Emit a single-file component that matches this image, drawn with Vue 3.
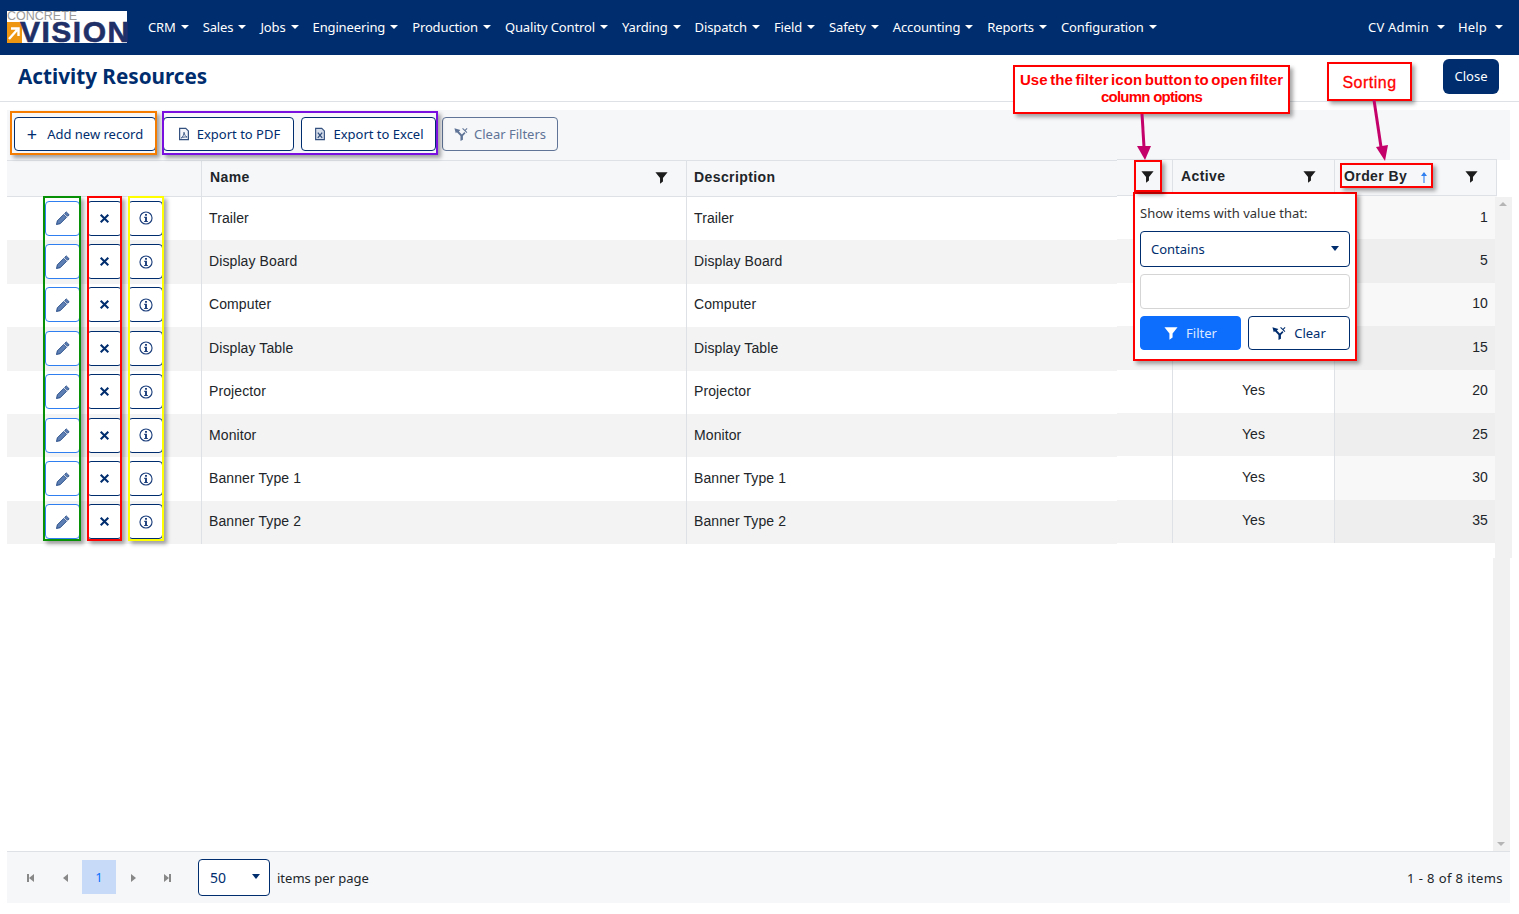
<script setup>
const menus = ['CRM','Sales','Jobs','Engineering','Production','Quality Control','Yarding','Dispatch','Field','Safety','Accounting','Reports','Configuration']
const rows = [
  { name:'Trailer', active:'Yes', order:1 },
  { name:'Display Board', active:'Yes', order:5 },
  { name:'Computer', active:'Yes', order:10 },
  { name:'Display Table', active:'Yes', order:15 },
  { name:'Projector', active:'Yes', order:20 },
  { name:'Monitor', active:'Yes', order:25 },
  { name:'Banner Type 1', active:'Yes', order:30 },
  { name:'Banner Type 2', active:'Yes', order:35 },
]
</script>

<template>
  <div class="app">
    <svg class="sprite" width="0" height="0">
      <symbol id="funnel" viewBox="0 0 16 16"><path d="M0.500 1.500h15L9.800 8.500V13l-3.600 2.600V8.500z" fill="currentColor"/></symbol>
      <symbol id="clearf" viewBox="0 0 16 16"><path d="M0.500 1.500l6.800 1.900-1.700 1.700 3.400 3.600 2.800-2.900 1.300 1.400-2.900 3.100v4.400L7.400 16V10.300L3.300 5.900 2 7z" fill="currentColor"/><path d="M9.800 1.500l5 5M15 1.500l-2.300 2.300" stroke="currentColor" stroke-width="1.200" fill="none"/></symbol>
      <symbol id="pencil" viewBox="0 0 16 16"><path d="M11.700 1l3.300 3.300-1.800 1.800-3.300-3.300zM8.800 3.900l3.300 3.300-7.300 7.300-4.300 1 1-4.300z" fill="#5d7fb3" stroke="#123a7a" stroke-width=".9" stroke-linejoin="round"/></symbol>
      <symbol id="cross" viewBox="0 0 16 16"><path d="M2.500 2.500l11 11M13.500 2.500l-11 11" stroke="currentColor" stroke-width="3" fill="none"/></symbol>
      <symbol id="info" viewBox="0 0 16 16"><circle cx="8" cy="8" r="6.900" fill="none" stroke="currentColor" stroke-width="1.300"/><path d="M6.900 3.400h2.200v2H6.900zM6 6.700h3.100v4.600h1v1.300H5.900v-1.300h1V8H6z" fill="currentColor"/></symbol>
      <symbol id="pdf" viewBox="0 0 16 16"><path d="M3 1.500h7l3 3v10H3z" fill="#f4f6fa" stroke="currentColor" stroke-width="1.400"/><path d="M4.800 12.500c2-1 3.200-4 3.200-6.500 .5 3 2 5 3.500 5.500-2.500-.3-4.700 0-6.700 1z" fill="none" stroke="currentColor" stroke-width="1"/></symbol>
      <symbol id="xls" viewBox="0 0 16 16"><path d="M3 1.500h7l3 3v10H3z" fill="#d5dcea" stroke="currentColor" stroke-width="1.300"/><path d="M5.500 6.500l5 6M10.500 6.500l-5 6" stroke="currentColor" stroke-width="1.500" fill="none"/></symbol>
      <symbol id="arrowup" viewBox="0 0 8 12"><path d="M4 2v10" stroke="currentColor" stroke-width="1.100" fill="none"/><path d="M4 1L7 5H1z" fill="currentColor"/></symbol>
    </svg>

    <nav class="nav">
      <div class="logo">
        <span class="logo-top">CONCRETE</span>
        <div class="logo-main">
          <svg class="logo-arrow" viewBox="0 0 15 21"><rect width="15" height="21" fill="#ee9611"/><path d="M2 17L10 8M4 6.500h7.500V14" stroke="#fff" stroke-width="2.400" fill="none"/></svg>
          <span class="logo-word">VISION</span>
        </div>
      </div>
      <ul class="menu">
        <li v-for="m in menus" :key="m">{{ m }}<i class="caret"></i></li>
      </ul>
      <ul class="menu menu-right">
        <li>CV Admin<i class="caret wide"></i></li>
        <li>Help<i class="caret wide"></i></li>
      </ul>
    </nav>

    <header class="titlebar">
      <h1>Activity Resources</h1>
      <button class="close">Close</button>
    </header>

    <main class="content">
      <div class="toolbar">
        <button class="btn add"><span class="plus">+</span>Add new record</button>
        <button class="btn pdf"><svg class="ic"><use href="#pdf"/></svg>Export to PDF</button>
        <button class="btn xls"><svg class="ic"><use href="#xls"/></svg>Export to Excel</button>
        <button class="btn clear"><svg class="ic"><use href="#clearf"/></svg>Clear Filters</button>
      </div>

      <div class="gridwrap">
        <section class="locked">
          <div class="hrow lgrid">
            <div class="hcell"></div>
            <div class="hcell">Name<svg class="funnel"><use href="#funnel"/></svg></div>
            <div class="hcell open">Description</div>
          </div>
          <div v-for="(r, i) in rows" :key="r.name" class="row lgrid" :class="{ alt: i % 2 }">
            <div class="cell actions">
              <button class="ibtn edit"><svg><use href="#pencil"/></svg></button>
              <button class="ibtn"><svg class="sm"><use href="#cross"/></svg></button>
              <button class="ibtn"><svg><use href="#info"/></svg></button>
            </div>
            <div class="cell">{{ r.name }}</div>
            <div class="cell open">{{ r.name }}</div>
          </div>
        </section>
        <section class="side">
          <div class="hrow rgrid">
            <div class="hcell filter-only"><svg class="funnel"><use href="#funnel"/></svg></div>
            <div class="hcell">Active<svg class="funnel"><use href="#funnel"/></svg></div>
            <div class="hcell last">Order By<svg class="sort"><use href="#arrowup"/></svg><svg class="funnel"><use href="#funnel"/></svg></div>
          </div>
          <div v-for="(r, i) in rows" :key="r.order" class="row rgrid" :class="{ alt: i % 2 }">
            <div class="cell"></div>
            <div class="cell center">{{ r.active }}</div>
            <div class="cell num">{{ r.order }}</div>
          </div>
        </section>
        <div class="sb sb-top"><i class="up"></i></div>
        <div class="sb sb-bottom"><i class="down"></i></div>
      </div>

      <footer class="pager">
        <span class="pg first"><i class="bar"></i><i class="tri-l"></i></span>
        <span class="pg prev"><i class="tri-l"></i></span>
        <span class="pg-cur">1</span>
        <span class="pg next"><i class="tri-r"></i></span>
        <span class="pg last-p"><i class="tri-r"></i><i class="bar"></i></span>
        <div class="size">50<i class="tri-d"></i></div>
        <span class="ipp">items per page</span>
        <span class="count">1 - 8 of 8 items</span>
      </footer>
    </main>

    <!-- filter popup -->
    <div class="popup">
      <div class="pop-label">Show items with value that:</div>
      <div class="pop-select">Contains<i class="tri-d"></i></div>
      <div class="pop-input"></div>
      <div class="pop-btns">
        <button class="pb primary"><svg class="ic"><use href="#funnel"/></svg>Filter</button>
        <button class="pb"><svg class="ic"><use href="#clearf"/></svg>Clear</button>
      </div>
    </div>

    <!-- annotation layer -->
    <div class="frame" style="left:10px;top:111px;width:147px;height:44px;border-color:#f47c00"></div>
    <div class="frame" style="left:162px;top:111px;width:276px;height:44px;border-color:#7a10e0"></div>
    <div class="frame" style="left:43px;top:196px;width:38px;height:345px;border-color:#079107"></div>
    <div class="frame" style="left:87px;top:196px;width:35px;height:345px;border-color:#f00"></div>
    <div class="frame" style="left:128px;top:196px;width:36px;height:345px;border-color:#ff0"></div>
    <div class="frame" style="left:1134px;top:160px;width:28px;height:32px;border-color:#f00"></div>
    <div class="frame" style="left:1340px;top:163px;width:93px;height:25px;border-color:#f00"></div>
    <div class="callout c1"><span>Use the filter icon button to open filter</span><span class="tight">column options</span></div>
    <div class="callout c2">Sorting</div>
    <svg class="arrows" width="1519" height="914">
      <g stroke="#c4006a" stroke-width="3" fill="#c4006a">
        <path d="M1142 114L1144 147" fill="none"/>
        <path d="M1137 146L1151 146L1145 160z" stroke="none"/>
        <path d="M1374 100L1381 147" fill="none"/>
        <path d="M1376 147L1388 145L1385 161z" stroke="none"/>
      </g>
    </svg>
  </div>
</template>

<style>
html, body { background: #fff; }
</style>

<style scoped>
* { box-sizing: border-box; }
.app { position: relative; width: 1519px; height: 914px; overflow: hidden; background: #fff; display: flex; flex-direction: column; font-family: "Noto Sans", sans-serif; font-size: 13px; color: #212529; }
.sprite { position: absolute; }
button { font-family: inherit; cursor: pointer; }

.nav { height: 55px; flex: none; background: #002d6e; display: flex; align-items: center; padding: 0 7px; color: #fff; }
.logo { width: 120px; height: 32px; margin-top: -2px; background: #fff; flex: none; display: flex; flex-direction: column; }
.logo-top { height: 10px; font: 12.500px/10px "Liberation Sans", sans-serif; color: #9a9a9a; }
.logo-main { height: 22px; position: relative; }
.logo-arrow { width: 15px; height: 21px; position: absolute; left: 0; bottom: 0; }
.logo-word { position: absolute; left: 13px; bottom: 0; font: 900 30px/22px "Liberation Sans", sans-serif; color: #1f2f68; letter-spacing: 1.500px; -webkit-text-stroke: .6px #1f2f68; }
.menu { list-style: none; margin: -1px 0 0; padding: 0; display: flex; gap: 14px; align-items: center; letter-spacing: -.13px; }
.nav > .menu:first-of-type { margin-left: 21px; }
.menu li { white-space: nowrap; display: flex; align-items: center; }
.caret { width: 0; height: 0; margin-left: 5px; border-left: 4px solid transparent; border-right: 4px solid transparent; border-top: 4px solid #fff; }
.caret.wide { margin-left: 8px; }
.menu-right { margin-left: auto; margin-right: 9px; gap: 13px; letter-spacing: .2px; }

.titlebar { height: 47px; flex: none; border-bottom: 1px solid #dee2e6; display: flex; align-items: center; justify-content: space-between; padding: 0 20px 0 18px; }
.titlebar h1 { margin: -4px 0 0; font: 700 20.700px/1.2 "Noto Sans", sans-serif; color: #002d6e; }
.close { margin-top: -4px; width: 56px; height: 35px; background: #002d6e; border: 0; border-radius: 6px; color: #fff; font-size: 13px; }

.content { flex: 1; min-height: 0; padding: 8px 9px 11px 7px; display: flex; flex-direction: column; }
.toolbar { height: 50px; flex: none; background: #f6f7f9; display: flex; align-items: center; padding: 0 0 2px 7px; gap: 7px; }
.btn { height: 34px; background: #fff; border: 1px solid #002d6e; border-radius: 4px; color: #002d6e; font-size: 13px; display: flex; align-items: center; justify-content: center; gap: 6px; padding: 0; }
.btn.add { width: 142px; gap: 10px; }
.btn.pdf { width: 131px; }
.btn.xls { width: 135px; }
.btn.clear { width: 116px; margin-left: -1px; color: #5f7496; border-color: #5f7496; background: transparent; }
.plus { font-size: 18px; line-height: 16px; }
.ic { width: 14px; height: 14px; }
.btn .ic { color: #33507f; }
.btn.clear .ic { color: #5f7496; }

.gridwrap { flex: 1; min-height: 0; display: flex; position: relative; }
.locked { width: 1110px; flex: none; }
.side { width: 380px; flex: none; margin-top: -1px; }
.lgrid { display: grid; grid-template-columns: 195px 485px 430px; }
.rgrid { display: grid; grid-template-columns: 56px 162px 162px; }
.hrow { height: 37px; background: #f6f7f9; border-top: 1px solid #dee2e6; border-bottom: 1px solid #dee2e6; font: 700 14px "Liberation Sans", sans-serif; letter-spacing: .4px; }
.hcell { border-right: 1px solid #dee2e6; display: flex; align-items: center; padding: 0 8px 3px 8px; position: relative; }
.hcell.open { border-right: 0; padding-left: 7px; }
.hcell.last { padding-left: 9px; }
.funnel { position: absolute; right: 18px; top: 10px; width: 13px; height: 13px; color: #1c1c1c; }
.sort { width: 8px; height: 12px; margin-left: 13px; margin-top: 1px; color: #2f7ff0; }
.row { height: 43.400px; background: #fff; font: 14px "Liberation Sans", sans-serif; letter-spacing: .1px; }
.row.alt { background: #f3f3f3; }
.cell { display: flex; align-items: center; padding: 0 7px 2px; border-right: 1px solid #dee2e6; }
.cell.open { border-right: 0; }
.cell.center { justify-content: center; }
.cell.num { justify-content: flex-end; background: #f8f8f8; border-right: 0; padding-right: 9px; }
.alt .cell.num { background: #eee; }
.actions { gap: 6.500px; padding: 0 0 1px 38px; }
.ibtn { width: 35px; height: 35px; flex: none; padding: 0; background: #fff; border: 1px solid #002d6e; border-radius: 4px; color: #1c3f7c; display: flex; align-items: center; justify-content: center; }
.ibtn.edit { border-color: #2f7ff0; }
.ibtn svg { width: 14px; height: 14px; }
.ibtn svg.sm { width: 11px; height: 11px; color: #002d6e; }

.sb { position: absolute; background: #f1f1f1; width: 17px; }
.sb-top { left: 1488px; top: 37px; height: 361px; }
.sb-bottom { left: 1486px; top: 398px; bottom: 0; }
.up, .down { position: absolute; left: 4px; width: 0; height: 0; border-left: 4px solid transparent; border-right: 4px solid transparent; }
.up { top: 5px; border-bottom: 4px solid #b5b5b5; }
.down { bottom: 5px; border-top: 4px solid #b5b5b5; }

.pager { height: 52px; flex: none; background: #f6f7f9; border-top: 1px solid #dee2e6; display: flex; align-items: center; position: relative; }
.pg { width: 34px; height: 34px; display: flex; align-items: center; justify-content: center; color: #777; }
.pg.first { margin-left: 6px; }
.pager .pg.prev { margin-left: 1px; }
.pg-cur { width: 34px; height: 34px; background: #c7dbf9; color: #0d6efd; display: flex; align-items: center; justify-content: center; margin-top: -1px; }
.bar { width: 2px; height: 8px; background: #888; }
.tri-l { width: 0; height: 0; border-top: 4px solid transparent; border-bottom: 4px solid transparent; border-right: 5px solid #888; }
.tri-r { width: 0; height: 0; border-top: 4px solid transparent; border-bottom: 4px solid transparent; border-left: 5px solid #888; }
.tri-d { position: absolute; width: 0; height: 0; border-left: 4px solid transparent; border-right: 4px solid transparent; border-top: 5px solid #002d6e; }
.size { position: relative; width: 72px; height: 37px; margin-left: 14px; background: #fff; border: 1px solid #002d6e; border-radius: 4px; color: #002d6e; display: flex; align-items: center; padding-left: 11px; font-size: 14px; }
.size .tri-d { right: 9px; top: 14px; }
.ipp { margin-left: 7px; }
.count { margin-left: auto; margin-right: 7px; letter-spacing: .4px; }

.popup { position: absolute; left: 1133px; top: 192px; width: 224px; height: 169px; background: #fff; border: 2px solid #f00; box-shadow: 3px 3px 4px rgba(0,0,0,.35); padding: 11px 5px 0 5px; display: flex; flex-direction: column; }
.pop-label { height: 17px; line-height: 17px; font-size: 13px; color: #333; }
.pop-select { position: relative; margin-top: 9px; height: 36px; width: 210px; border: 1px solid #002d6e; border-radius: 4px; color: #002d6e; display: flex; align-items: center; padding-left: 10px; }
.pop-select .tri-d { right: 10px; top: 14px; }
.pop-input { margin-top: 7px; height: 35px; width: 210px; border: 1px solid #d5d5d5; border-radius: 4px; }
.pop-btns { margin-top: 7px; display: flex; gap: 7px; }
.pb { height: 34px; border-radius: 4px; background: #fff; border: 1px solid #002d6e; color: #002d6e; font-size: 13px; display: flex; align-items: center; justify-content: center; gap: 8px; width: 102px; padding: 0; }
.pb.primary { width: 101px; background: #0d6efd; border-color: #0d6efd; color: #dce8ff; }
.pb.primary .ic { color: #fff; }

.frame { position: absolute; border: 2px solid; box-shadow: 3px 3px 4px rgba(0,0,0,.35); pointer-events: none; }
.callout { position: absolute; background: #fff; border: 2px solid #f00; box-shadow: 3px 3px 4px rgba(0,0,0,.35); color: #f00; text-align: center; font: 700 15px/17px "Liberation Sans", sans-serif; display: flex; flex-direction: column; align-items: center; justify-content: center; }
.c1 { left: 1013px; top: 65px; width: 277px; height: 49px; letter-spacing: .1px; word-spacing: -1.800px; padding-bottom: 4px; }
.tight { letter-spacing: -.75px; word-spacing: 0; }
.c2 { left: 1327px; top: 62px; width: 85px; height: 39px; padding-top: 1px; font-size: 16px; font-weight: 400; letter-spacing: .5px; -webkit-text-stroke: .3px #f00; }
.arrows { position: absolute; left: 0; top: 0; pointer-events: none; }
</style>
